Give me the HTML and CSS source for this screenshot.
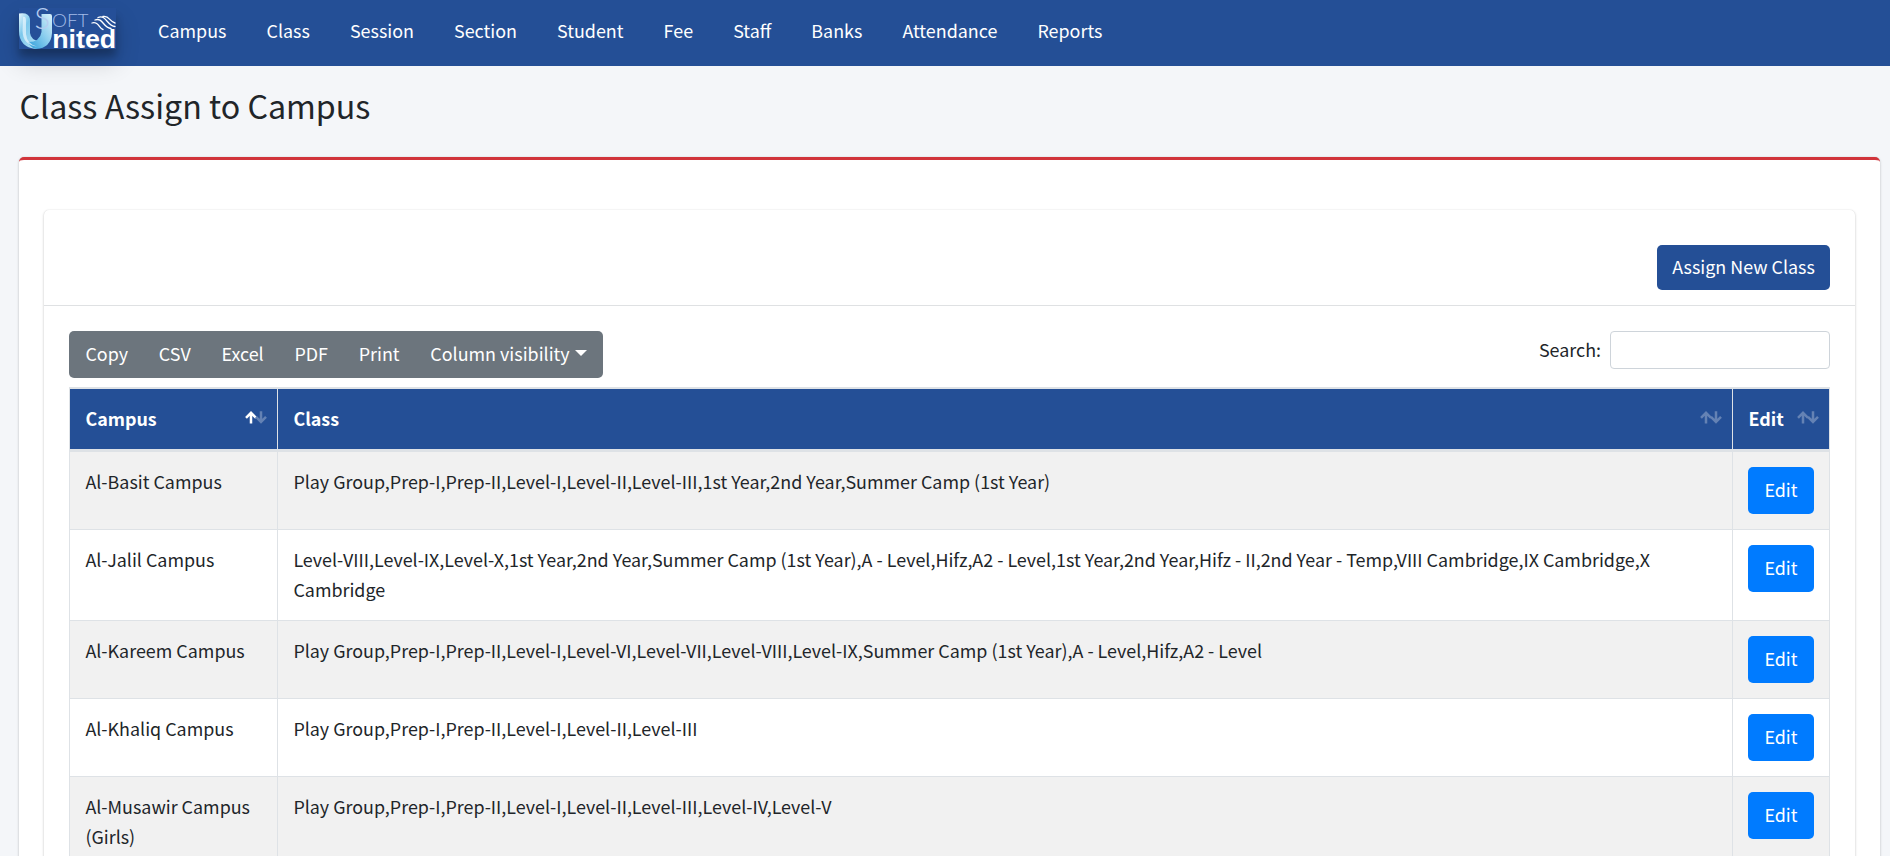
FILE: index.html
```html
<!DOCTYPE html>
<html lang="en">
<head>
<meta charset="utf-8">
<title>Class Assign to Campus</title>
<link rel="stylesheet" href="styles.css">
</head>
<body>
<svg class="defs" width="0" height="0">
  <symbol id="arrow-up" viewBox="0 0 12 13"><path d="M6 12.400V2M1 6.800 6 1.800l5 5" fill="none" stroke="currentColor" stroke-width="2.500"/></symbol>
  <symbol id="arrow-down" viewBox="0 0 12 13"><path d="M6 .3v10.400M1 5.900l5 5 5-5" fill="none" stroke="currentColor" stroke-width="2.500"/></symbol>
</svg>
<nav class="navbar">
  <a class="brand" href="#">
    <svg width="97" height="41" viewBox="0 0 97 41">
      <defs>
        <linearGradient id="u-left" x1="0" y1="0" x2="1" y2="1">
          <stop offset="0" stop-color="#e8f7fd"/><stop offset=".35" stop-color="#7cc8ec"/><stop offset="1" stop-color="#bfe6f7"/>
        </linearGradient>
        <linearGradient id="u-right" x1="1" y1="0" x2="0" y2="1">
          <stop offset="0" stop-color="#d9f0fa"/><stop offset=".45" stop-color="#8fd0ef"/><stop offset="1" stop-color="#2b9bd8"/>
        </linearGradient>
      </defs>
      <path d="M0 5.500Q10 4 11 11V25Q12 32 20 33L17 41Q0 39 0 23Z" fill="url(#u-left)"/>
      <path d="M22.500 6H31Q33 6 33 8V25Q32 40 17 41Q12 40 9 34Q21 34 22.500 24Z" fill="url(#u-right)"/>
      <path d="M4 9Q7 8 7 13V26Q8 36 18 38.500Q4 37 3.500 23Z" fill="#e9f7fd" opacity=".7"/>
      <text class="logo-s" x="15.500" y="20.500">S</text>
      <text class="logo-oft" x="33" y="18.800" textLength="36.500" lengthAdjust="spacingAndGlyphs">OFT</text>
      <text class="logo-nited" x="33.200" y="39.700" textLength="64" lengthAdjust="spacingAndGlyphs">nited</text>
      <path d="M79 9.500C87 6 88 18 96 18.500M84 8.500C90 7 91 14 96 15M76 12C84 9 84 20 92 20.500M73 15C80 13 80 21 84 21.500" fill="none" stroke="#fff" stroke-width="1.300" stroke-linecap="round"/>
    </svg>
  </a>
  <ul class="nav-list">
    <li><a href="#">Campus</a></li><li><a href="#">Class</a></li><li><a href="#">Session</a></li><li><a href="#">Section</a></li><li><a href="#">Student</a></li><li><a href="#">Fee</a></li><li><a href="#">Staff</a></li><li><a href="#">Banks</a></li><li><a href="#">Attendance</a></li><li><a href="#">Reports</a></li>
  </ul>
</nav>
<main class="content">
  <h1 class="page-title">Class Assign to Campus</h1>
  <section class="card card-outer">
    <div class="card card-inner">
      <div class="card-header"><button class="btn btn-assign">Assign New Class</button></div>
      <div class="card-body">
        <div class="toolbar">
          <div class="btn-group"><button>Copy</button><button>CSV</button><button>Excel</button><button>PDF</button><button>Print</button><button class="dropdown">Column visibility</button></div>
          <label class="search"><span>Search:</span><input type="search"></label>
        </div>
        <table class="grid">
          <colgroup><col class="col-campus"><col class="col-class"><col class="col-edit"></colgroup>
          <thead><tr>
            <th><div class="head">Campus<span class="sort sort-asc"><svg><use href="#arrow-up"/></svg><svg><use href="#arrow-down"/></svg></span></div></th>
            <th><div class="head">Class<span class="sort"><svg><use href="#arrow-up"/></svg><svg><use href="#arrow-down"/></svg></span></div></th>
            <th><div class="head">Edit<span class="sort"><svg><use href="#arrow-up"/></svg><svg><use href="#arrow-down"/></svg></span></div></th>
          </tr></thead>
          <tbody>
            <tr><td>Al-Basit Campus</td><td>Play Group,Prep-I,Prep-II,Level-I,Level-II,Level-III,1st Year,2nd Year,Summer Camp (1st Year)</td><td><button class="btn btn-edit">Edit</button></td></tr>
            <tr><td>Al-Jalil Campus</td><td>Level-VIII,Level-IX,Level-X,1st Year,2nd Year,Summer Camp (1st Year),A - Level,Hifz,A2 - Level,1st Year,2nd Year,Hifz - II,2nd Year - Temp,VIII Cambridge,IX Cambridge,X Cambridge</td><td><button class="btn btn-edit">Edit</button></td></tr>
            <tr><td>Al-Kareem Campus</td><td>Play Group,Prep-I,Prep-II,Level-I,Level-VI,Level-VII,Level-VIII,Level-IX,Summer Camp (1st Year),A - Level,Hifz,A2 - Level</td><td><button class="btn btn-edit">Edit</button></td></tr>
            <tr><td>Al-Khaliq Campus</td><td>Play Group,Prep-I,Prep-II,Level-I,Level-II,Level-III</td><td><button class="btn btn-edit">Edit</button></td></tr>
            <tr><td>Al-Musawir Campus (Girls)</td><td>Play Group,Prep-I,Prep-II,Level-I,Level-II,Level-III,Level-IV,Level-V</td><td><button class="btn btn-edit">Edit</button></td></tr>
          </tbody>
        </table>
      </div>
    </div>
  </section>
</main>
</body>
</html>
```
FILE: styles.css
```css
* { box-sizing: border-box; }
html { overflow: hidden; }
body {
  display: flex;
  flex-direction: column;
  margin: 0;
  height: 856px;
  overflow: hidden;
  background: #f4f6f9;
  color: #212529;
  font-family: "Noto Sans CJK SC", "Noto Sans", sans-serif;
  font-size: 17.9px;
  line-height: 30px;
}
button, input { font: inherit; border: 0; margin: 0; }
.defs { display: block; position: absolute; }

.navbar {
  display: flex;
  flex: none;
  align-items: flex-start;
  height: 66px;
  padding: 8px 19px;
  background: #244f96;
}
.brand {
  width: 97px;
  height: 41px;
  background: #254f98;
  box-shadow: 0 12.5px 25px rgba(0,0,0,.19), 0 7.5px 7.5px rgba(0,0,0,.23);
}
.brand svg { display: block; overflow: visible; }
.logo-s { font: 300 29px Lato, sans-serif; fill: #b5cdf0; }
.logo-oft { font: 300 18px Lato, sans-serif; fill: #a3bce8; }
.logo-nited { font: bold 26px "Liberation Sans", sans-serif; fill: #fff; }
.nav-list { display: flex; list-style: none; margin: 7px 0 0 22px; padding: 0; }
.nav-list a { display: block; padding: 0 20.06px; color: #fff; text-decoration: none; }

.content { flex: 1; min-height: 0; overflow: hidden; margin-top: -26px; padding: 26px 10px 0 19px; }
.page-title { margin: 0; padding: 18px 0 0 .5px; height: 91px; font-size: 32.2px; font-weight: 400; line-height: 43px; }
.card { background: #fff; border-radius: 5px; box-shadow: 0 0 1px rgba(0,0,0,.125), 0 1px 3px rgba(0,0,0,.2); }
.card-outer { height: 900px; border-top: 3px solid #d1343b; padding: 50px 25px; }
.card-inner { height: 850px; }
.card-header { display: flex; justify-content: flex-end; height: 96px; padding: 35px 25px 0; border-bottom: 1px solid #dfe1e3; }
.btn { color: #fff; border-radius: 5px; padding: 0 0 3px; text-align: center; }
.btn-assign { width: 173px; height: 45px; background: #244f96; }
.card-body { padding: 25px 25px 0; }

.toolbar { display: flex; justify-content: space-between; align-items: flex-start; height: 56px; }
.btn-group { display: flex; width: 534px; height: 47px; padding-left: 1px; background: #6c757d; border-radius: 5px; overflow: hidden; }
.btn-group button { padding: 0 15.4px 3px; background: none; color: #fff; white-space: nowrap; }
.dropdown::after {
  content: "";
  display: inline-block;
  margin-left: 5px;
  vertical-align: 5px;
  border: 6px solid transparent;
  border-top: 6px solid #fff;
  border-bottom: 0;
}
.search { display: flex; gap: 9px; align-items: center; height: 38px; }
.search span { padding-bottom: 3px; }
.search input { width: 220px; height: 38px; border: 1px solid #ced4da; border-radius: 4px; background: #fff; }

.grid { width: 1761px; table-layout: fixed; border-collapse: separate; border-spacing: 0; border: solid #dee2e6; border-width: 2px 0 0 1px; }
.col-campus { width: 208px; }
.col-class { width: 1455px; }
.col-edit { width: 97px; }
th { height: 63px; padding: 0 10px 2px 15.4px; background: #244f96; color: #fff; text-align: left; border-right: 1px solid #dee2e6; border-bottom: 3px solid #dee2e6; font-weight: 700; }
td { padding: 14px 15px 16px 15.4px; vertical-align: top; border-right: 1px solid #dee2e6; border-bottom: 1px solid #dee2e6; }
td:last-child { padding: 15px; }
tbody tr:nth-child(odd) { background: #f1f1f1; }
.head { display: flex; justify-content: space-between; align-items: center; }
.sort { display: flex; margin-top: -2px; color: #6482b4; }
.sort svg { display: block; width: 12px; height: 13px; }
.sort svg + svg { margin-left: -2px; }
.sort-asc svg:first-child { color: #fff; }
.btn-edit { display: block; width: 66px; height: 47px; background: #007bff; }
```
